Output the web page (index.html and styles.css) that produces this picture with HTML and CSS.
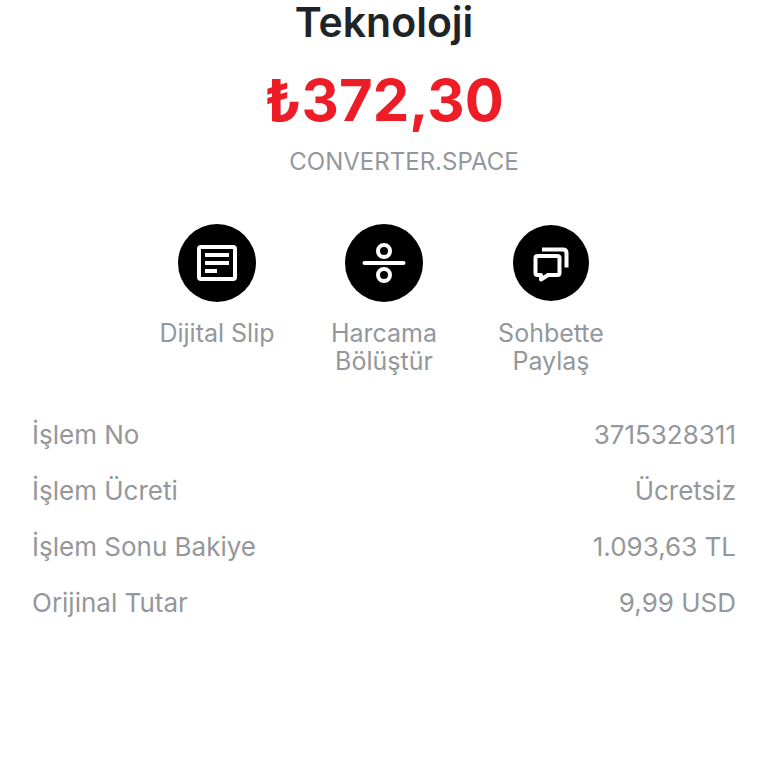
FILE: index.html
```html
<!DOCTYPE html>
<html lang="tr">
<head>
    <meta charset="UTF-8">
    <meta name="viewport" content="width=device-width, initial-scale=1.0">
    <title>İşlem Detayı</title>
    <link rel="stylesheet" href="styles.css">
</head>
<body>
    <main class="transaction">
        <header class="summary">
            <h1>Teknoloji</h1>
            <p class="amount">₺372,30</p>
            <p class="merchant">CONVERTER.SPACE</p>
        </header>

        <div class="actions">
            <button type="button" class="action">
                <svg class="action-icon" viewBox="0 0 78 78" aria-hidden="true">
                    <circle cx="39" cy="39" r="39"/>
                    <rect class="line" x="21" y="23" width="36" height="32" rx="2"/>
                    <path class="line" d="M27 31h24M27 39h24M27 47h12"/>
                </svg>
                <span>Dijital Slip</span>
            </button>
            <button type="button" class="action">
                <svg class="action-icon" viewBox="0 0 78 78" aria-hidden="true">
                    <circle cx="39" cy="39" r="39"/>
                    <circle class="line" cx="39" cy="27" r="6"/>
                    <path class="line round" d="M19.5 39h39"/>
                    <circle class="line" cx="39" cy="51" r="6"/>
                </svg>
                <span>Harcama Bölüştür</span>
            </button>
            <button type="button" class="action">
                <svg class="action-icon" viewBox="0 0 78 78" aria-hidden="true">
                    <circle cx="39" cy="39" r="38"/>
                    <path class="line bubble" d="M23.500 34q0-2 2-2h20q2 0 2 2v15q0 2-2 2h-9.500l-7 4.500v-4.500h-3.500q-2 0-2-2z"/>
                    <path class="line bubble" d="M30 25.500h21q3.500 0 3.500 3.500v14.500"/>
                </svg>
                <span>Sohbette Paylaş</span>
            </button>
        </div>

        <dl class="details">
            <div class="row">
                <dt>İşlem No</dt>
                <dd>3715328311</dd>
            </div>
            <div class="row">
                <dt>İşlem Ücreti</dt>
                <dd>Ücretsiz</dd>
            </div>
            <div class="row">
                <dt>İşlem Sonu Bakiye</dt>
                <dd>1.093,63 TL</dd>
            </div>
            <div class="row">
                <dt>Orijinal Tutar</dt>
                <dd>9,99 USD</dd>
            </div>
        </dl>
    </main>
</body>
</html>
```
FILE: styles.css
```css
:root {
    --ink: #212427;
    --red: #ed1c26;
    --gray: #94979b;
    --white: #ffffff;
}

* {
    box-sizing: border-box;
    margin: 0;
    padding: 0;
}

body {
    font-family: 'Inter', 'Noto Sans', sans-serif;
    background-color: var(--white);
    color: var(--gray);
}

.transaction {
    padding: 0 32px 32px;
}

.summary {
    text-align: center;
}

h1 {
    color: var(--ink);
    font-size: 41px;
    font-weight: 600;
    line-height: 44px;
}

.amount {
    margin-top: 24px;
    color: var(--red);
    font-size: 58px;
    font-weight: 700;
    line-height: 64px;
}

.merchant {
    margin-top: 16px;
    padding-left: 40px;
    font-size: 24px;
    line-height: 28px;
}

.actions {
    display: flex;
    justify-content: center;
    gap: 32px;
    margin-top: 48px;
}

.action {
    display: flex;
    flex-direction: column;
    align-items: center;
    gap: 17px;
    width: 135px;
    border: none;
    background: none;
    color: var(--gray);
    font-family: inherit;
    font-size: 25px;
    line-height: 28px;
    cursor: pointer;
}

.action-icon {
    width: 78px;
    height: 78px;
}

.line {
    fill: none;
    stroke: var(--white);
    stroke-width: 4;
}

.bubble {
    stroke-linejoin: round;
}

.round {
    stroke-linecap: round;
}

.details {
    margin-top: 32px;
    font-size: 26px;
}

.row {
    display: flex;
    justify-content: space-between;
    gap: 16px;
    padding: 12px 0;
    line-height: 32px;
}
```
